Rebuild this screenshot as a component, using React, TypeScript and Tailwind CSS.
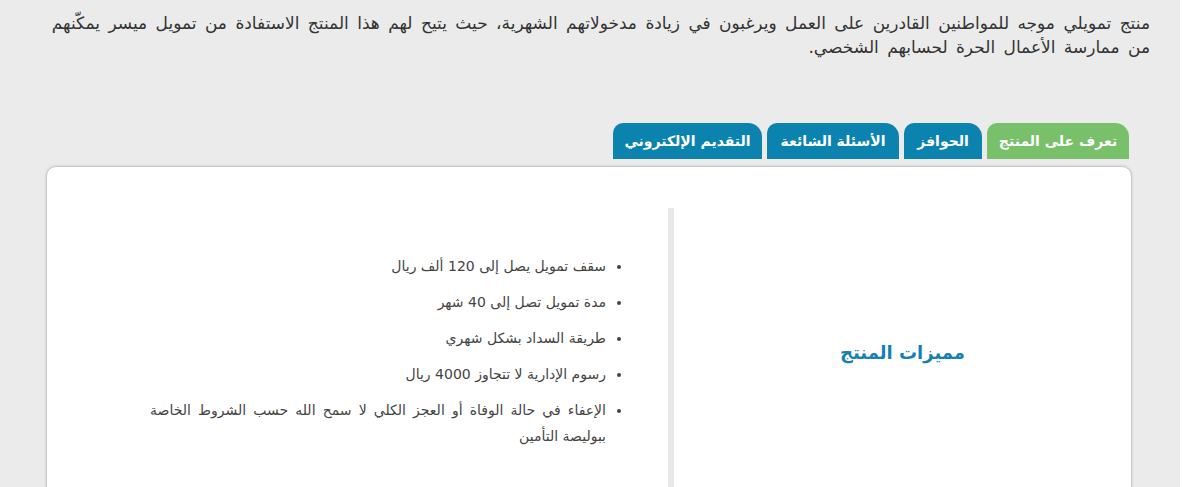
import React from 'react';

const tabs = [
  { label: 'تعرف على المنتج', active: true, w: 'w-[142px]' },
  { label: 'الحوافز', active: false, w: 'w-[78px]' },
  { label: 'الأسئلة الشائعة', active: false, w: 'w-[132px]' },
  { label: 'التقديم الإلكتروني', active: false, w: 'w-[149px]' },
];

const features = [
  'سقف تمويل يصل إلى 120 ألف ريال',
  'مدة تمويل تصل إلى 40 شهر',
  'طريقة السداد بشكل شهري',
  'رسوم الإدارية لا تتجاوز 4000 ريال',
  'الإعفاء في حالة الوفاة أو العجز الكلي لا سمح الله حسب الشروط الخاصة ببوليصة التأمين',
];

const App = () => {
  return (
    <div className="w-[1200px] h-[487px] bg-white overflow-hidden">
      <div dir="rtl" className="w-[1180px] h-[487px] bg-[#ebebeb] font-['DejaVu_Sans',sans-serif]">
        {/* intro */}
        <p className="pr-[30px] pl-[30px] pt-[11px] text-[17px] leading-[24px] text-[#333] [word-spacing:3px]">
          منتج تمويلي موجه للمواطنين القادرين على العمل ويرغبون في زيادة مدخولاتهم الشهرية، حيث يتيح لهم هذا المنتج الاستفادة من تمويل ميسر يمكّنهم
          <br />
          من ممارسة الأعمال الحرة لحسابهم الشخصي.
        </p>

        {/* tabs */}
        <div className="mt-[64px] pr-[51px] flex gap-[5px]">
          {tabs.map((t) => (
            <div
              key={t.label}
              className={`${t.w} h-[36px] flex items-center justify-center rounded-tr-[14px] rounded-tl-[10px] text-white text-[14px] font-bold ${
                t.active ? 'bg-[#78c06a]' : 'bg-[#0b83ae]'
              }`}>
              {t.label}
            </div>
          ))}
        </div>

        {/* panel */}
        <div className="mt-[7px] mr-[48px] ml-[46px] h-[340px] bg-white border border-[#c8c8c8] rounded-[10px] shadow-[0_0_3px_rgba(0,0,0,0.15)] flex pt-[41px]">
          <div className="w-[457px] flex items-center justify-center pb-[8px]">
            <h3 className="text-[#1581b1] text-[18px] font-bold">مميزات المنتج</h3>
          </div>
          <div className="w-[6px] bg-[#e8e8e8]" />
          <div className="flex-1 pr-[48px] pt-[45px]">
            <ul className="list-disc w-[470px] pr-[14px] text-[14px] leading-[26px] text-[#444] text-justify">
              {features.map((f) => (
                <li key={f} className="mb-[10px]">
                  {f}
                </li>
              ))}
            </ul>
          </div>
        </div>
      </div>
    </div>
  );
};

export default App;
